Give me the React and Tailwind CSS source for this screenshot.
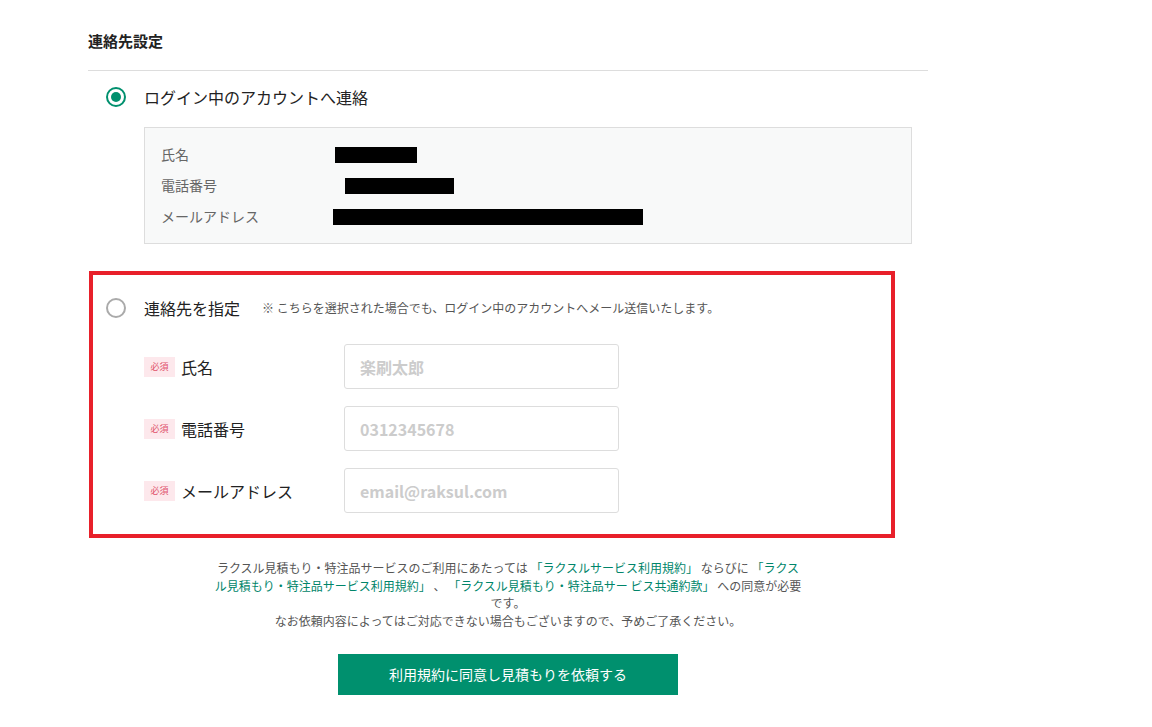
import { useState } from "react";

const FONT = { fontFamily: '"Noto Sans CJK JP", "Noto Sans", sans-serif' };

function Radio({ checked }) {
  return (
    <span
      className={`flex items-center justify-center w-[20px] h-[20px] rounded-full border-2 shrink-0 ${
        checked ? "border-[#00906e]" : "border-[#aaaaaa]"
      }`}
    >
      {checked && <span className="w-[10px] h-[10px] rounded-full bg-[#00906e]" />}
    </span>
  );
}

export default function App() {
  const [mode, setMode] = useState("login");
  const [form, setForm] = useState({ name: "", phone: "", email: "" });

  const fields = [
    { key: "name", label: "氏名", placeholder: "楽刷太郎" },
    { key: "phone", label: "電話番号", placeholder: "0312345678" },
    { key: "email", label: "メールアドレス", placeholder: "email@raksul.com" },
  ];

  return (
    <div className="min-h-screen bg-white text-[#222]" style={FONT}>
      <div className="w-[840px] ml-[88px] pt-[30px]">
        <h2 className="text-[15px] leading-[22px] font-bold mb-[18px]">連絡先設定</h2>
        <div className="border-t border-[#dddddd]" />

        {/* Login account */}
        <button
          onClick={() => setMode("login")}
          className="flex items-center gap-[18px] pl-[18px] mt-[15px] h-[22px]"
        >
          <Radio checked={mode === "login"} />
          <span className="text-[16px] leading-[22px]">ログイン中のアカウントへ連絡</span>
        </button>

        <div className="ml-[56px] mt-[19px] w-[768px] bg-[#f8f9f9] border border-[#dddddd] px-[16px] py-[16px] flex flex-col gap-[10px]">
          {[
            { label: "氏名", w: 82, ml: 0 },
            { label: "電話番号", w: 109, ml: 10 },
            { label: "メールアドレス", w: 310, ml: -2 },
          ].map(({ label, w, ml }) => (
            <div key={label} className="flex items-center h-[21px]">
              <span className="w-[174px] text-[14px] leading-[21px] text-[#666]">{label}</span>
              <span
                className="h-[16px] bg-black"
                style={{ width: w, marginLeft: ml }}
              />
            </div>
          ))}
        </div>

        {/* Custom contact */}
        <div className="mt-[27px] ml-[1px] w-[806px] border-4 border-[#e8202a] pt-[22px] pb-[21px]">
          <div className="flex items-center pl-[13px] h-[22px]">
            <button onClick={() => setMode("custom")} className="flex items-center gap-[18px]">
              <Radio checked={mode === "custom"} />
              <span className="text-[16px] leading-[22px]">連絡先を指定</span>
            </button>
            <span className="ml-[22px] text-[12px] text-[#555]">
              ※ こちらを選択された場合でも、ログイン中のアカウントへメール送信いたします。
            </span>
          </div>

          <div className="mt-[25px] flex flex-col gap-[17px] pl-[51px]">
            {fields.map(({ key, label, placeholder }) => (
              <div key={key} className="flex items-center">
                <div className="w-[200px] flex items-center gap-[6px]">
                  <span className="w-[31px] h-[20px] bg-[#fde8ec] text-[#e0526b] text-[9px] flex items-center justify-center">
                    必須
                  </span>
                  <span className="text-[16px] leading-[22px]">{label}</span>
                </div>
                <input
                  type="text"
                  value={form[key]}
                  placeholder={placeholder}
                  onChange={(e) => setForm({ ...form, [key]: e.target.value })}
                  className="w-[275px] h-[45px] px-[15px] border border-[#dddddd] rounded-[3px] text-[16px] font-bold placeholder:text-[#cccccc] focus:outline-none"
                  style={FONT}
                />
              </div>
            ))}
          </div>
        </div>

        {/* Terms */}
        <p className="mt-[21px] text-center text-[12px] leading-[17.5px] text-[#555]">
          ラクスル見積もり・特注品サービスのご利用にあたっては
          <span className="text-[#00856a]"> 「ラクスルサービス利用規約」 </span>
          ならびに
          <span className="text-[#00856a]"> 「ラクス</span>
          <br />
          <span className="text-[#00856a]">ル見積もり・特注品サービス利用規約」</span>
          {" "}、{" "}
          <span className="text-[#00856a]">「ラクスル見積もり・特注品サー ビス共通約款」</span>
          {" "}への同意が必要
          <br />
          です。
          <br />
          なお依頼内容によってはご対応できない場合もございますので、予めご了承ください。
        </p>

        <div className="flex justify-center mt-[25px]">
          <button className="w-[340px] h-[41px] bg-[#00906e] hover:bg-[#007f61] text-white text-[14px]">
            利用規約に同意し見積もりを依頼する
          </button>
        </div>
      </div>
    </div>
  );
}
